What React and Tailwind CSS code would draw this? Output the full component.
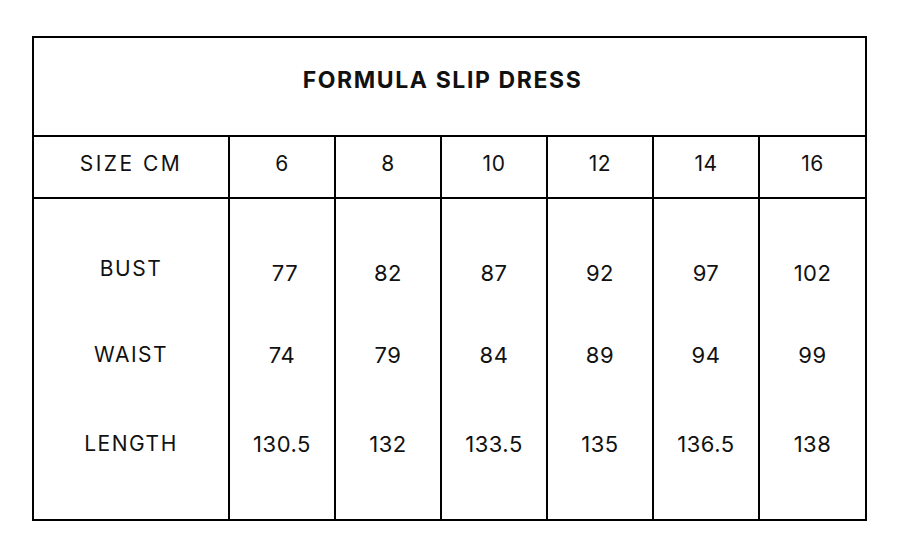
import React from "react";

const sizes = ["6", "8", "10", "12", "14", "16"];
const rows = [
  { label: "BUST", values: ["77", "82", "87", "92", "97", "102"] },
  { label: "WAIST", values: ["74", "79", "84", "89", "94", "99"] },
  { label: "LENGTH", values: ["130.5", "132", "133.5", "135", "136.5", "138"] },
];

const font = { fontFamily: "Inter, 'Liberation Sans', sans-serif" };

const App = () => {
  const cols = [{ label: "SIZE CM", vals: rows.map((r) => r.label) }].concat(
    sizes.map((s, i) => ({ label: s, vals: rows.map((r) => r.values[i]) }))
  );

  return (
    <div className="w-[900px] h-[540px] bg-white pt-[36px] pl-[32px] text-[#111]" style={font}>
      <div className="w-[835px] h-[485px] border-2 border-black flex flex-col">
        <div className="h-[99px] flex items-center justify-center border-b-2 border-black">
          <h1 className="text-[23px] font-bold tracking-[1.6px] pb-[12px] pr-[14px]">FORMULA SLIP DRESS</h1>
        </div>

        <div className="flex flex-1">
          {cols.map((c, i) => (
            <div
              key={i}
              className={`flex flex-col ${i === 0 ? "w-[196px]" : "w-[106px]"} ${i < cols.length - 1 ? "border-r-2 border-black" : "flex-1"}`}
            >
              <div className={`h-[62px] flex items-center justify-center border-b-2 border-black text-[21px] pb-[6px] ${i === 0 ? "tracking-[2.5px]" : "tracking-[0.5px]"}`}>
                {c.label}
              </div>
              <div className={`flex flex-col items-center pt-[56px] ${i === 0 ? "text-[21px] tracking-[1.5px]" : "text-[22px] tracking-[0.5px]"}`}>
                <div className={`h-[28px] leading-[28px] ${i === 0 ? "" : "mt-[4px]"} ${i === 1 ? "pl-[6px]" : ""}`}>{c.vals[0]}</div>
                <div className={`h-[28px] leading-[28px] ${i === 0 ? "mt-[58px]" : "mt-[54px]"}`}>{c.vals[1]}</div>
                <div className="h-[28px] leading-[28px] mt-[61px]">{c.vals[2]}</div>
              </div>
            </div>
          ))}
        </div>
      </div>
    </div>
  );
};

export default App;
